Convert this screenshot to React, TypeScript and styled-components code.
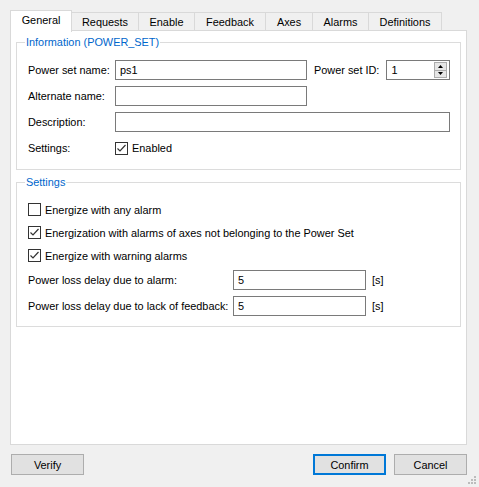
import React from 'react'
import styled, { createGlobalStyle } from 'styled-components'

const GlobalStyle = createGlobalStyle`
  html, body {
    margin: 0;
    padding: 0;
    background: #f0f0f0;
  }
  body {
    font-family: 'Liberation Sans', Arial, sans-serif;
    font-size: 10.9px;
    color: #000;
  }
`

const Window = styled.div`
  width: 479px;
  height: 487px;
  background: #f0f0f0;
  display: flex;
  flex-direction: column;
  position: relative;
  box-sizing: border-box;
  padding: 9px 12px 0 10px;
`

const TabStrip = styled.div`
  display: flex;
  align-items: flex-end;
  height: 22px;
  position: relative;
  z-index: 1;
`

const Tab = styled.div<{ $active?: boolean; $w: number }>`
  box-sizing: border-box;
  width: ${(p) => p.$w}px;
  height: ${(p) => (p.$active ? 22 : 19)}px;
  margin-bottom: ${(p) => (p.$active ? -1 : 0)}px;
  border: 1px solid #d9d9d9;
  border-left-width: ${(p) => (p.$active ? 1 : 0)}px;
  border-bottom: ${(p) => (p.$active ? 'none' : '1px solid #d9d9d9')};
  background: ${(p) => (p.$active ? '#fff' : '#f0f0f0')};
  display: flex;
  align-items: center;
  justify-content: center;
  padding-bottom: ${(p) => (p.$active ? 3 : 0)}px;
  white-space: nowrap;
  &:first-child {
    border-left-width: 1px;
  }
`

const Panel = styled.div`
  box-sizing: border-box;
  width: 457px;
  height: 415px;
  margin-top: -1px;
  background: #fff;
  border: 1px solid #d9d9d9;
  padding: 4px 5px 0 5px;
  display: flex;
  flex-direction: column;
  gap: 5px;
`

const Group = styled.fieldset<{ $h: number; $top: number }>`
  margin: 0;
  box-sizing: border-box;
  height: ${(p) => p.$h}px;
  border: 1px solid #dcdcdc;
  padding: ${(p) => p.$top}px 11px 0 11px;
  min-width: 0;
`

const Legend = styled.legend`
  color: #0066cc;
  padding: 0 1px;
  margin-left: -3px;
  line-height: 15px;
`

const FormGrid = styled.div`
  display: grid;
  grid-template-columns: 87px auto;
  row-gap: 6px;
  align-items: center;
`

const Label = styled.span`
  white-space: nowrap;
  line-height: 20px;
`

const InlineRow = styled.div`
  display: flex;
  align-items: center;
`

const TextBox = styled.div<{ $w: number }>`
  box-sizing: border-box;
  width: ${(p) => p.$w}px;
  height: 20px;
  border: 1px solid #7a7a7a;
  background: #fff;
  padding: 0 4px;
  line-height: 18px;
  position: relative;
  flex-shrink: 0;
`

const SideLabel = styled.span`
  margin-left: 7px;
  margin-right: 7px;
  white-space: nowrap;
`

const Spinner = styled.div`
  position: absolute;
  right: 2px;
  top: 1px;
  width: 13px;
  height: 16px;
  display: flex;
  flex-direction: column;
`

const SpinHalf = styled.div`
  flex: 1;
  background: #e6e6e6;
  border: 1px solid #acacac;
  display: flex;
  align-items: center;
  justify-content: center;
  & + & {
    border-top: none;
  }
`

const CheckRow = styled.label`
  display: flex;
  align-items: center;
  gap: 4px;
  height: 17px;
  white-space: nowrap;
`

const Box = styled.span`
  box-sizing: border-box;
  width: 13px;
  height: 13px;
  border: 1px solid #333;
  background: #fff;
  display: inline-flex;
  align-items: center;
  justify-content: center;
  flex-shrink: 0;
`

const SettingsList = styled.div`
  display: flex;
  flex-direction: column;
  gap: 6px;
`

const DelayList = styled.div`
  display: flex;
  flex-direction: column;
  gap: 6px;
`

const DelayRow = styled.div`
  display: grid;
  grid-template-columns: 199px 133px auto;
  align-items: center;
  column-gap: 6px;
`

const ButtonBar = styled.div`
  display: flex;
  align-items: center;
  margin-top: 9px;
  padding-left: 1px;
`

const Button = styled.div<{ $default?: boolean; $gap?: number }>`
  box-sizing: border-box;
  width: 73px;
  height: 21px;
  margin-left: ${(p) => p.$gap ?? 0}px;
  background: #e1e1e1;
  border: ${(p) => (p.$default ? '2px solid #0078d7' : '1px solid #adadad')};
  display: flex;
  align-items: center;
  justify-content: center;
`

const Spacer = styled.div`
  flex: 1;
`

const Grip = styled.svg`
  position: absolute;
  right: 2px;
  bottom: 2px;
`

const Check = ({ on }: { on?: boolean }) => (
  <Box>
    {on && (
      <svg width="11" height="11" viewBox="0 0 11 11">
        <path d="M1.5 5.5 L4 8 L9.5 2" fill="none" stroke="#333" strokeWidth="1.2" />
      </svg>
    )}
  </Box>
)

const tabs = [
  { name: 'General', w: 62 },
  { name: 'Requests', w: 67 },
  { name: 'Enable', w: 56 },
  { name: 'Feedback', w: 71 },
  { name: 'Axes', w: 47 },
  { name: 'Alarms', w: 56 },
  { name: 'Definitions', w: 73 },
]

export default function App() {
  return (
    <>
      <GlobalStyle />
      <Window>
        <TabStrip>
          {tabs.map((t, i) => (
            <Tab key={t.name} $w={t.w} $active={i === 0}>
              {t.name}
            </Tab>
          ))}
        </TabStrip>
        <Panel>
          <Group $h={135} $top={10}>
            <Legend>Information (POWER_SET)</Legend>
            <FormGrid>
              <Label>Power set name:</Label>
              <InlineRow>
                <TextBox $w={192}>ps1</TextBox>
                <SideLabel>Power set ID:</SideLabel>
                <TextBox $w={64}>
                  1
                  <Spinner>
                    <SpinHalf>
                      <svg width="5" height="3" viewBox="0 0 5 3">
                        <path d="M2.5 0 L5 3 L0 3 Z" fill="#000" />
                      </svg>
                    </SpinHalf>
                    <SpinHalf>
                      <svg width="5" height="3" viewBox="0 0 5 3">
                        <path d="M0 0 L5 0 L2.5 3 Z" fill="#000" />
                      </svg>
                    </SpinHalf>
                  </Spinner>
                </TextBox>
              </InlineRow>
              <Label>Alternate name:</Label>
              <TextBox $w={192} />
              <Label>Description:</Label>
              <TextBox $w={335} />
              <Label>Settings:</Label>
              <CheckRow>
                <Check on />
                Enabled
              </CheckRow>
            </FormGrid>
          </Group>
          <Group $h={152} $top={11}>
            <Legend>Settings</Legend>
            <SettingsList>
              <CheckRow>
                <Check />
                Energize with any alarm
              </CheckRow>
              <CheckRow>
                <Check on />
                Energization with alarms of axes not belonging to the Power Set
              </CheckRow>
              <CheckRow>
                <Check on />
                Energize with warning alarms
              </CheckRow>
              <DelayList>
                <DelayRow>
                  <Label>Power loss delay due to alarm:</Label>
                  <TextBox $w={133}>5</TextBox>
                  <span>[s]</span>
                </DelayRow>
                <DelayRow>
                  <Label>Power loss delay due to lack of feedback:</Label>
                  <TextBox $w={133}>5</TextBox>
                  <span>[s]</span>
                </DelayRow>
              </DelayList>
            </SettingsList>
          </Group>
        </Panel>
        <ButtonBar>
          <Button>Verify</Button>
          <Spacer />
          <Button $default>Confirm</Button>
          <Button $gap={8}>Cancel</Button>
        </ButtonBar>
        <Grip width="10" height="10" viewBox="0 0 10 10">
          {[
            [8, 2],
            [8, 5],
            [8, 8],
            [5, 5],
            [5, 8],
            [2, 8],
          ].map(([x, y]) => (
            <rect key={`${x}-${y}`} x={x - 1} y={y - 1} width="2" height="2" fill="#bcbcbc" />
          ))}
        </Grip>
      </Window>
    </>
  )
}
